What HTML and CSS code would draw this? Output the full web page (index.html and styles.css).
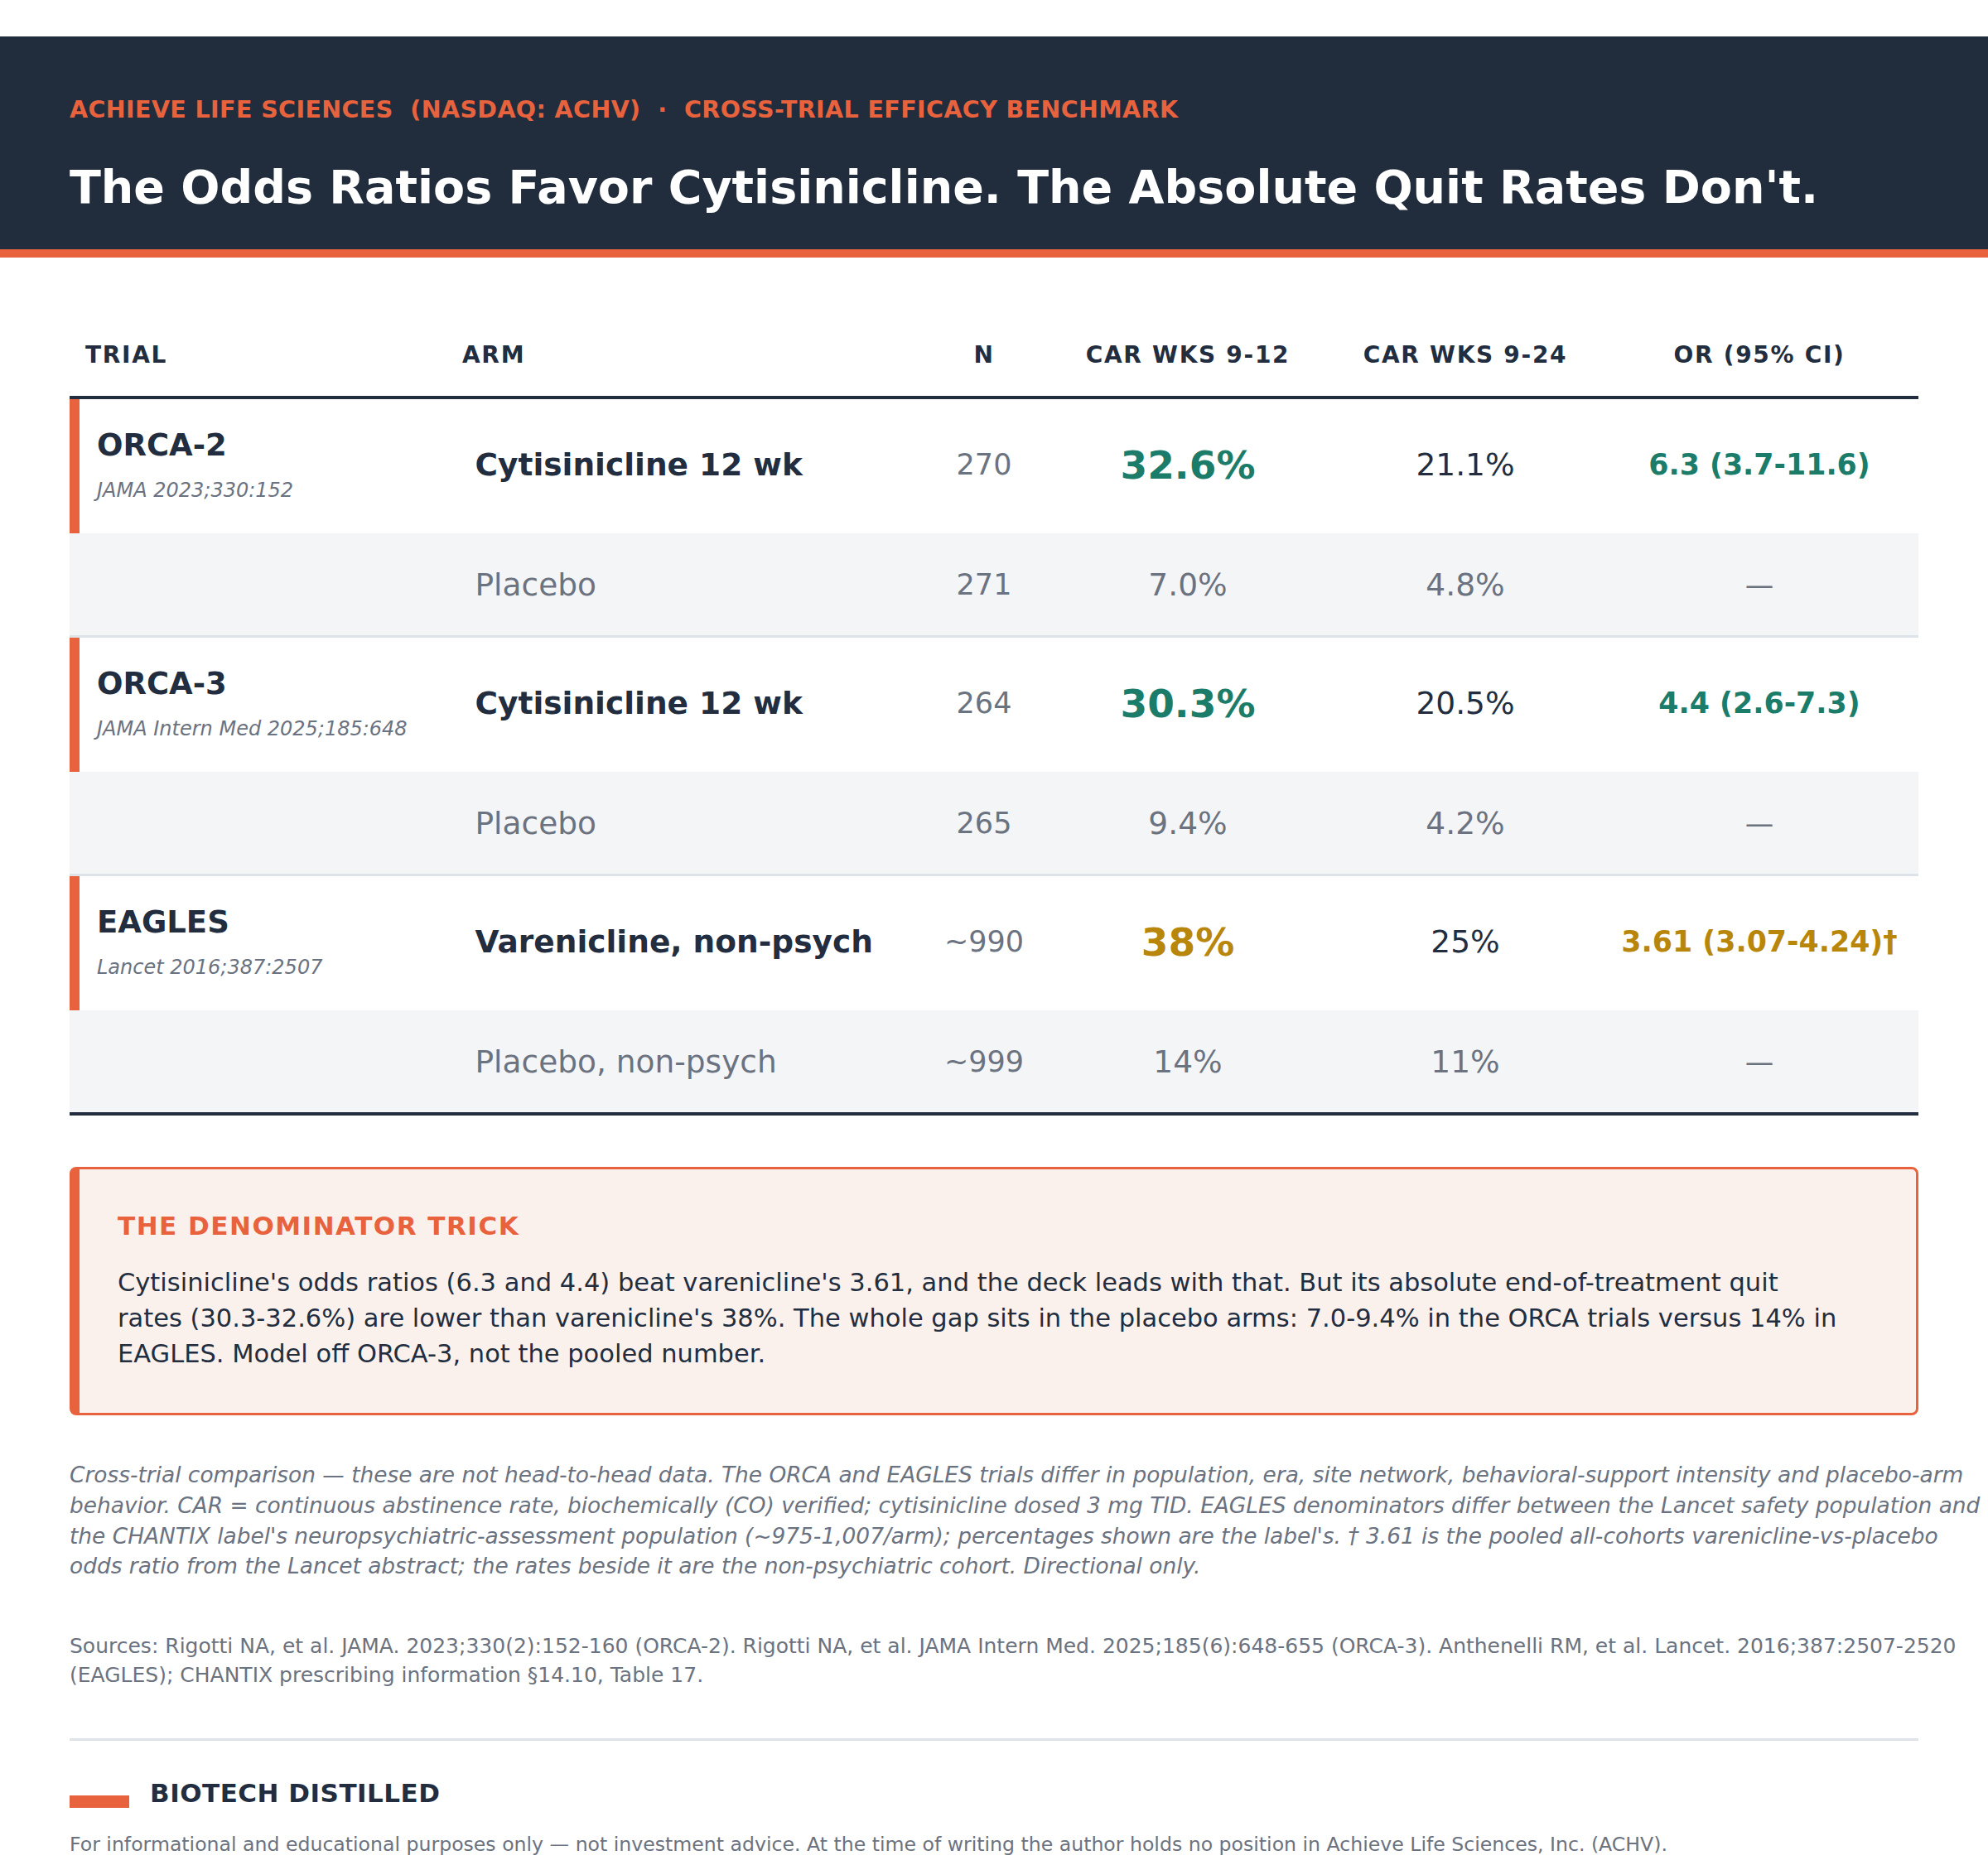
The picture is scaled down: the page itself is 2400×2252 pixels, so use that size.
FILE: index.html
```html
<!DOCTYPE html>
<html lang="en">
<head>
<meta charset="utf-8">
<title>Cross-Trial Efficacy Benchmark</title>
<link rel="stylesheet" href="styles.css">
</head>
<body>
<header class="masthead">
  <div class="kicker">ACHIEVE LIFE SCIENCES&nbsp; (NASDAQ: ACHV)&nbsp; ·&nbsp; CROSS-TRIAL EFFICACY BENCHMARK</div>
  <h1 class="headline">The Odds Ratios Favor Cytisinicline. The Absolute Quit Rates Don't.</h1>
</header>

<main class="content">
  <div class="bench">
    <div class="row head">
      <div class="c trial">TRIAL</div>
      <div class="c arm">ARM</div>
      <div class="c num">N</div>
      <div class="c num">CAR WKS 9-12</div>
      <div class="c num">CAR WKS 9-24</div>
      <div class="c num">OR (95% CI)</div>
    </div>

    <div class="row active">
      <div class="c trial"><span class="tname">ORCA-2</span><span class="tref">JAMA 2023;330:152</span></div>
      <div class="c arm">Cytisinicline 12 wk</div>
      <div class="c num n">270</div>
      <div class="c num big green">32.6%</div>
      <div class="c num w24">21.1%</div>
      <div class="c num or green">6.3 (3.7-11.6)</div>
    </div>
    <div class="row pbo sep">
      <div class="c trial"></div>
      <div class="c arm">Placebo</div>
      <div class="c num n">271</div>
      <div class="c num w12">7.0%</div>
      <div class="c num w24">4.8%</div>
      <div class="c num dash">—</div>
    </div>

    <div class="row active">
      <div class="c trial"><span class="tname">ORCA-3</span><span class="tref">JAMA Intern Med 2025;185:648</span></div>
      <div class="c arm">Cytisinicline 12 wk</div>
      <div class="c num n">264</div>
      <div class="c num big green">30.3%</div>
      <div class="c num w24">20.5%</div>
      <div class="c num or green">4.4 (2.6-7.3)</div>
    </div>
    <div class="row pbo sep">
      <div class="c trial"></div>
      <div class="c arm">Placebo</div>
      <div class="c num n">265</div>
      <div class="c num w12">9.4%</div>
      <div class="c num w24">4.2%</div>
      <div class="c num dash">—</div>
    </div>

    <div class="row active">
      <div class="c trial"><span class="tname">EAGLES</span><span class="tref">Lancet 2016;387:2507</span></div>
      <div class="c arm">Varenicline, non-psych</div>
      <div class="c num n">~990</div>
      <div class="c num big gold">38%</div>
      <div class="c num w24">25%</div>
      <div class="c num or gold">3.61 (3.07-4.24)†</div>
    </div>
    <div class="row pbo last">
      <div class="c trial"></div>
      <div class="c arm">Placebo, non-psych</div>
      <div class="c num n">~999</div>
      <div class="c num w12">14%</div>
      <div class="c num w24">11%</div>
      <div class="c num dash">—</div>
    </div>
  </div>

  <aside class="callout">
    <h2 class="callout-title">THE DENOMINATOR TRICK</h2>
    <p class="callout-body">Cytisinicline's odds ratios (6.3 and 4.4) beat varenicline's 3.61, and the deck leads with that. But its absolute end-of-treatment quit rates (30.3-32.6%) are lower than varenicline's 38%. The whole gap sits in the placebo arms: 7.0-9.4% in the ORCA trials versus 14% in EAGLES. Model off ORCA-3, not the pooled number.</p>
  </aside>

  <p class="note">Cross-trial comparison — these are not head-to-head data. The ORCA and EAGLES trials differ in population, era, site network, behavioral-support intensity and placebo-arm behavior. CAR = continuous abstinence rate, biochemically (CO) verified; cytisinicline dosed 3 mg TID. EAGLES denominators differ between the Lancet safety population and the CHANTIX label's neuropsychiatric-assessment population (~975-1,007/arm); percentages shown are the label's. † 3.61 is the pooled all-cohorts varenicline-vs-placebo odds ratio from the Lancet abstract; the rates beside it are the non-psychiatric cohort. Directional only.</p>

  <p class="sources">Sources: Rigotti NA, et al. JAMA. 2023;330(2):152-160 (ORCA-2). Rigotti NA, et al. JAMA Intern Med. 2025;185(6):648-655 (ORCA-3). Anthenelli RM, et al. Lancet. 2016;387:2507-2520 (EAGLES); CHANTIX prescribing information §14.10, Table 17.</p>

  <footer class="foot">
    <div class="brand"><span class="brand-bar"></span><span class="brand-name">BIOTECH DISTILLED</span></div>
    <p class="disclaimer">For informational and educational purposes only — not investment advice. At the time of writing the author holds no position in Achieve Life Sciences, Inc. (ACHV).</p>
  </footer>
</main>
</body>
</html>
```

FILE: styles.css
```css
* { box-sizing: border-box; }

html, body {
  margin: 0;
  padding: 0;
  background: #ffffff;
}

body {
  font-family: "DejaVu Sans", "Liberation Sans", sans-serif;
  color: #222e3f;
}

/* ---------- masthead ---------- */
.masthead {
  margin-top: 44px;
  background: #212d3d;
  border-bottom: 10px solid #e8633d;
  padding: 73px 84px 43px;
}

.kicker {
  font-size: 28.5px;
  line-height: 32px;
  font-weight: 700;
  letter-spacing: 0.4px;
  color: #e8633d;
}

.headline {
  margin: 44px 0 0;
  font-size: 55.5px;
  line-height: 65px;
  font-weight: 700;
  color: #ffffff;
}

/* ---------- content ---------- */
.content {
  padding: 70px 84px 0;
}

.bench {
  width: 2232px;
}

.row {
  display: grid;
  grid-template-columns: 457px 573px 148px 344px 326px 384px;
}

.c {
  display: flex;
  align-items: center;
}

.c.num {
  justify-content: center;
  text-align: center;
}

/* header */
.row.head {
  border-bottom: 4px solid #222e3f;
}

.row.head .c {
  padding: 31px 0 32px;
  font-size: 28px;
  line-height: 34px;
  font-weight: 700;
  letter-spacing: 1.7px;
  color: #222e3f;
}

.row.head .trial { padding-left: 19px; }
.row.head .arm { padding-left: 17px; }

/* body rows */
.row.active .c {
  padding-bottom: 4px;
}

.row.active .trial {
  border-left: 12px solid #e8633d;
  padding: 35px 0 37px 21px;
  flex-direction: column;
  align-items: flex-start;
  justify-content: center;
}

.tname {
  font-size: 37px;
  line-height: 42px;
  font-weight: 700;
  color: #222e3f;
}

.tref {
  margin-top: 18px;
  font-size: 24px;
  line-height: 30px;
  font-style: italic;
  color: #6b7280;
}

.arm {
  padding-left: 32.5px;
  font-size: 37.5px;
  line-height: 43px;
}

.row.active .arm {
  font-weight: 700;
  color: #222e3f;
}

.row.pbo {
  background: #f4f5f7;
}

.row.pbo .c {
  padding-top: 40px;
  padding-bottom: 39px;
}

.row.pbo .arm { color: #6b7280; }

.row.sep { border-bottom: 3px solid #dde3e9; }
.row.last { border-bottom: 4px solid #222e3f; }

.n {
  font-size: 35px;
  color: #6b7280;
}

.w12 {
  font-size: 37.5px;
  color: #6b7280;
}

.w24 {
  font-size: 37.5px;
  color: #222e3f;
}

.row.pbo .w24 { color: #6b7280; }

.big {
  font-size: 47px;
  font-weight: 700;
}

.or {
  font-size: 34.8px;
  font-weight: 700;
}

.dash {
  font-size: 34.5px;
  color: #6b7280;
}

.green { color: #1c7c6a; }
.gold { color: #b8860b; }

/* ---------- callout ---------- */
.callout {
  margin-top: 62px;
  width: 2232px;
  background: #fbf1ec;
  border: 3px solid #e8633d;
  border-left-width: 12px;
  border-radius: 8px;
  padding: 50px 88px 50px 46px;
}

.callout-title {
  margin: 0;
  font-size: 31px;
  line-height: 37px;
  font-weight: 700;
  letter-spacing: 1.5px;
  color: #e8633d;
}

.callout-body {
  margin: 28px 0 0;
  font-size: 30.5px;
  line-height: 43px;
  color: #222e3f;
}

/* ---------- notes ---------- */
.note {
  margin: 54px 0 0;
  width: 2316px;
  font-size: 26.4px;
  line-height: 36.8px;
  font-style: italic;
  color: #6b7280;
}

.sources {
  margin: 60px 0 0;
  width: 2316px;
  font-size: 25px;
  line-height: 35.2px;
  color: #6b7280;
}

/* ---------- footer ---------- */
.foot {
  margin-top: 58px;
  width: 2232px;
  border-top: 3px solid #dde3e9;
  padding-top: 45px;
}

.brand {
  display: flex;
  align-items: flex-end;
}

.brand-bar {
  width: 72px;
  height: 15px;
  background: #e8633d;
  margin-right: 25px;
}

.brand-name {
  font-size: 31px;
  line-height: 36px;
  font-weight: 700;
  letter-spacing: 0.5px;
  color: #222e3f;
}

.disclaimer {
  margin: 28px 0 0;
  font-size: 23.6px;
  line-height: 32px;
  color: #6b7280;
}
```
